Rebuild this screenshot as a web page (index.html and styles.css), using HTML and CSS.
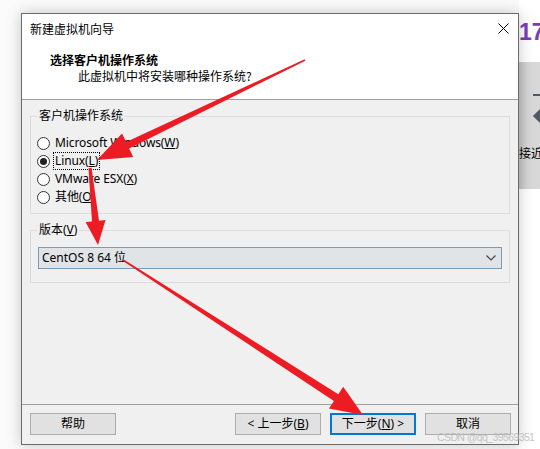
FILE: index.html
```html
<!DOCTYPE html>
<html lang="zh-CN">
<head>
<meta charset="utf-8">
<title>新建虚拟机向导</title>
<link rel="stylesheet" href="styles.css">
</head>
<body>
<div class="screen">
  <div class="bgapp">
    <div class="bg-num">17</div>
    <div class="bg-panel">
      <div class="bg-dash"></div>
      <div class="bg-diamond"></div>
      <div class="bg-text">接近</div>
    </div>
  </div>

  <div class="dialog">
    <div class="top">
      <div class="titlebar">
        <span class="title">新建虚拟机向导</span>
        <svg class="close" width="11" height="11" viewBox="0 0 11 11"><path d="M0.5 0.5 L10.5 10.5 M10.5 0.5 L0.5 10.5" stroke="#000" stroke-width="1"/></svg>
      </div>
      <div class="header">
        <div class="h-title">选择客户机操作系统</div>
        <div class="h-sub">此虚拟机中将安装哪种操作系统?</div>
      </div>
    </div>

    <div class="content">
      <fieldset class="group g-os">
        <legend>客户机操作系统</legend>
        <div class="radio"><span class="dot"></span><span class="lbl">Microsoft Windows(<u>W</u>)</span></div>
        <div class="radio"><span class="dot on"></span><span class="lbl focus">Linux(<u>L</u>)</span></div>
        <div class="radio"><span class="dot"></span><span class="lbl">VMware ESX(<u>X</u>)</span></div>
        <div class="radio"><span class="dot"></span><span class="lbl">其他(<u>O</u>)</span></div>
      </fieldset>
      <fieldset class="group g-ver">
        <legend>版本(<u>V</u>)</legend>
        <div class="select">
          <span>CentOS 8 64 位</span>
          <svg class="chev" width="10" height="6" viewBox="0 0 10 6"><path d="M0.5 0.5 L5 5 L9.5 0.5" fill="none" stroke="#444" stroke-width="1.2"/></svg>
        </div>
      </fieldset>
    </div>

    <div class="footer">
      <div class="btn">帮助</div>
      <div class="btn back">&lt; 上一步(<u>B</u>)</div>
      <div class="btn next">下一步(<u>N</u>) &gt;</div>
      <div class="btn">取消</div>
    </div>
  </div>

  <svg class="arrows" width="540" height="449" viewBox="0 0 540 449">
    <polygon fill="#ed1c24" points="304.65,59.28 126.1,142.1 122.0,133.6 97,160 133.2,157.0 129.1,148.5 305.35,60.72"/>
    <polygon fill="#ed1c24" points="88.5,168.15 92.0,221.5 85.6,222.1 98,245 105.5,220.1 99.0,220.7 91.5,167.85"/>
    <polygon fill="#ed1c24" points="122.57,260.67 333.9,401.0 329.0,408.5 363,415 343.2,386.7 338.3,394.2 123.43,259.33"/>
  </svg>

  <div class="watermark">CSDN @qq_39569351</div>
</div>
</body>
</html>
```

FILE: styles.css
```css
* { box-sizing: border-box; }

html, body {
  margin: 0;
  padding: 0;
  background: #ffffff;
}

body {
  font-family: "Noto Sans", "Noto Sans CJK SC", sans-serif;
  font-size: 12px;
  color: #000;
}

.screen {
  position: relative;
  width: 540px;
  height: 449px;
  overflow: hidden;
  background: #fbfbfb;
  padding: 13px 0 0 21px;
}

/* background application peeking out at the right */
.bgapp {
  position: absolute;
  left: 519px;
  top: 0;
  width: 21px;
  height: 449px;
  background: #ffffff;
}

.bg-num {
  margin-top: 20px;
  height: 29px;
  font-family: "Liberation Sans", sans-serif;
  font-size: 23px;
  font-weight: bold;
  color: #7b3db6;
  line-height: 24px;
}

.bg-panel {
  margin-top: 13px;
  height: 127px;
  background: linear-gradient(90deg, #c4c4c4, #d6d6d6 40%, #d8d8d8);
  display: flex;
  flex-direction: column;
  align-items: flex-start;
  padding-top: 32px;
}

.bg-dash {
  width: 8px;
  height: 2px;
  margin-left: 14px;
  background: #4d5a66;
}

.bg-diamond {
  width: 10px;
  height: 10px;
  margin: 15px 0 0 16px;
  background: #4d5a66;
  transform: rotate(45deg);
}

.bg-text {
  margin-top: 25px;
  font-family: "Noto Sans CJK SC", sans-serif;
  font-size: 12px;
  line-height: 14px;
  white-space: nowrap;
  color: #000;
}

/* dialog */
.dialog {
  position: relative;
  width: 498px;
  height: 432px;
  border: 1px solid #6b6b6b;
  background: #f0f0f0;
  box-shadow: 0 0 14px rgba(0, 0, 0, 0.22);
  display: flex;
  flex-direction: column;
}

.top {
  background: #ffffff;
  height: 86px;
  border-bottom: 1px solid #a0a0a0;
}

.titlebar {
  height: 30px;
  display: flex;
  align-items: center;
  justify-content: space-between;
  padding: 0 9px 0 8px;
}

.title {
  line-height: 16px;
  font-family: "Noto Sans CJK SC", sans-serif;
}

.close {
  display: block;
  margin-top: -2px;
}

.header {
  padding: 8px 0 0 28px;
}

.h-title {
  font-family: "Noto Sans CJK SC", sans-serif;
  font-weight: bold;
  line-height: 16px;
}

.h-sub {
  font-family: "Noto Sans CJK SC", sans-serif;
  line-height: 16px;
  margin-left: 28px;
}

.content {
  flex: 1;
  padding: 8px 8px 0 8px;
  border-bottom: 1px solid #a0a0a0;
}

.group {
  margin: 0;
  border: 1px solid #dcdcdc;
  padding: 0 7px;
  min-width: 0;
}

.group legend {
  padding: 0 2px;
  margin-left: -1px;
  line-height: 16px;
  font-family: "Noto Sans", "Noto Sans CJK SC", sans-serif;
}

.g-os {
  padding-top: 10px;
  padding-bottom: 7px;
}

.g-ver {
  margin-top: 8px;
  padding-top: 9px;
  padding-bottom: 13px;
}

.radio {
  height: 18px;
  display: flex;
  align-items: center;
}

.dot {
  width: 13px;
  height: 13px;
  border: 1px solid #333;
  border-radius: 50%;
  background: #fff;
  margin-left: -1px;
  margin-right: 3px;
  display: flex;
  align-items: center;
  justify-content: center;
}

.dot.on::after {
  content: "";
  width: 7px;
  height: 7px;
  border-radius: 50%;
  background: #222;
}

.lbl {
  line-height: 16px;
  padding: 0 1px;
  border: 1px solid transparent;
  letter-spacing: -0.1px;
}

.lbl.focus {
  border: 1px dotted #000;
}

.select {
  height: 22px;
  border: 1px solid #7a9ab6;
  background: #e1e4e7;
  display: flex;
  align-items: center;
  justify-content: space-between;
  padding: 0 5px 0 3px;
}

.select span {
  line-height: 16px;
}

.chev {
  display: block;
}

.footer {
  height: 39px;
  display: flex;
  align-items: flex-start;
  padding: 8px 7px 0 8px;
}

.btn {
  width: 86px;
  height: 22px;
  border: 1px solid #adadad;
  background: #e1e1e1;
  display: flex;
  align-items: center;
  justify-content: center;
  line-height: 16px;
  margin-left: 9px;
}

.btn:first-child {
  margin-left: 0;
}

.btn.back {
  margin-left: auto;
}

.btn.next {
  border: 2px solid #0078d7;
}

.arrows {
  position: absolute;
  left: 0;
  top: 0;
}

.watermark {
  position: absolute;
  left: 437px;
  top: 431px;
  font-family: "Liberation Sans", sans-serif;
  font-size: 10.5px;
  line-height: 12px;
  letter-spacing: -0.6px;
  color: rgba(185, 185, 185, 0.85);
  white-space: nowrap;
}
```
